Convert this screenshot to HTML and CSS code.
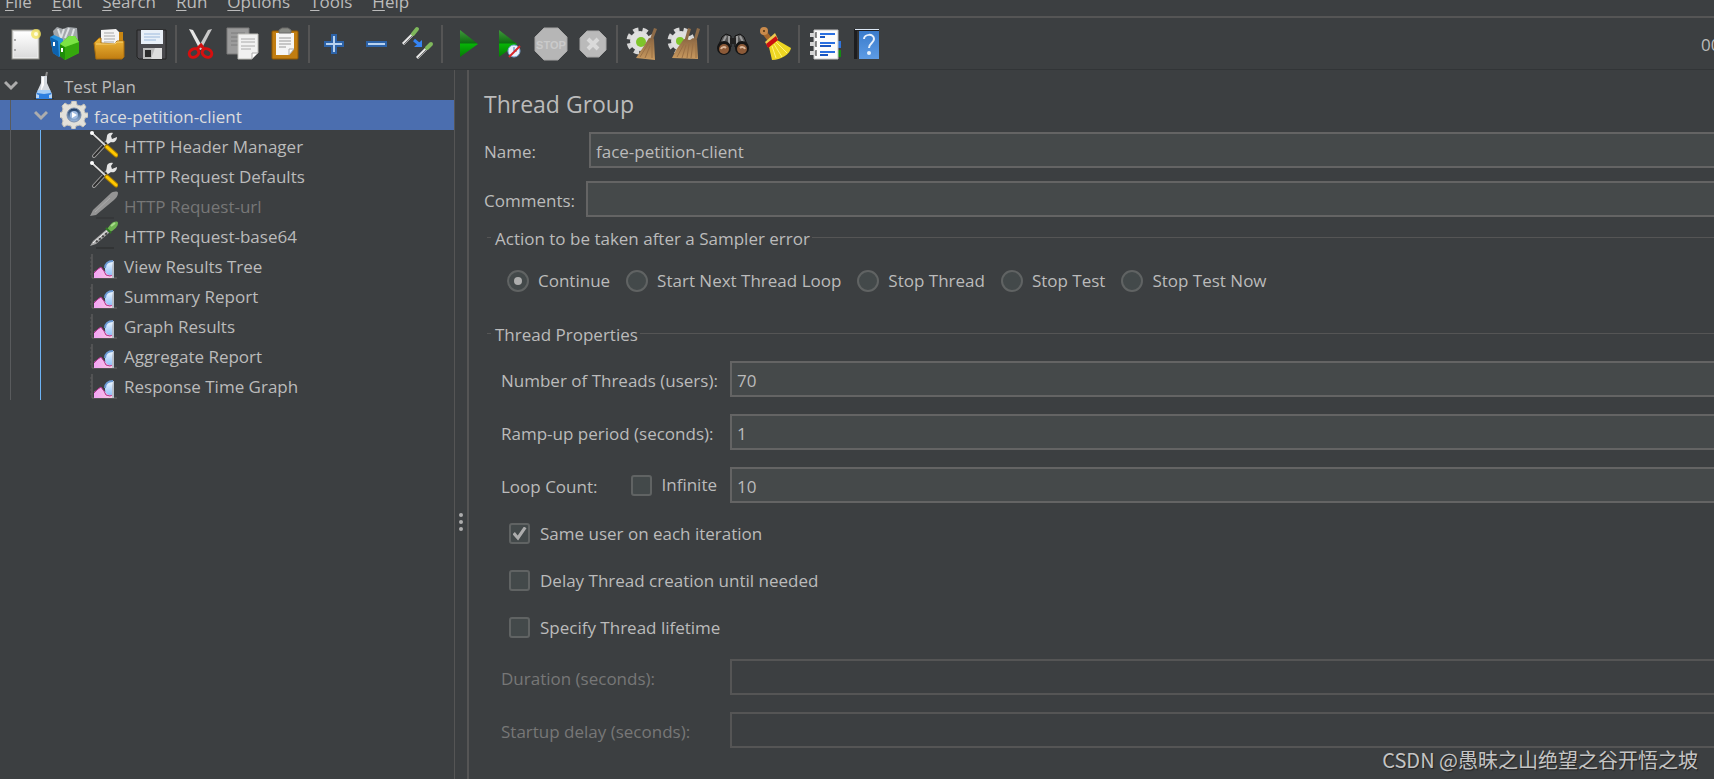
FILE: index.html
```html
<!DOCTYPE html>
<html lang="en">
<head>
<meta charset="utf-8">
<title>Thread Group</title>
<link rel="stylesheet" href="styles.css">
</head>
<body>
<svg class="defs" aria-hidden="true">
  <defs>
    <linearGradient id="paper" x1="0" y1="0" x2="0" y2="1"><stop offset="0" stop-color="#fff"/><stop offset="1" stop-color="#dcdcdc"/></linearGradient>
    <linearGradient id="gold" x1="0" y1="0" x2="0" y2="1"><stop offset="0" stop-color="#f0b93a"/><stop offset="1" stop-color="#c17d11"/></linearGradient>
    <linearGradient id="green" x1="0" y1="0" x2="0" y2="1"><stop offset="0" stop-color="#3f9a3a"/><stop offset=".48" stop-color="#0f6b12"/><stop offset=".52" stop-color="#06b406"/><stop offset="1" stop-color="#067a06"/></linearGradient>
    <linearGradient id="straw" x1="0" y1="0" x2="0" y2="1"><stop offset="0" stop-color="#8a6642"/><stop offset="1" stop-color="#c99a5f"/></linearGradient>
    <linearGradient id="book" x1="0" y1="0" x2="0" y2="1"><stop offset="0" stop-color="#3a7bcb"/><stop offset="1" stop-color="#5d9be4"/></linearGradient>
    <linearGradient id="pink" x1="0" y1="0" x2="1" y2="0"><stop offset="0" stop-color="#f3a3f5"/><stop offset="1" stop-color="#f9cbe0"/></linearGradient>
    <linearGradient id="sky" x1="0" y1="0" x2="0" y2="1"><stop offset="0" stop-color="#f4faff"/><stop offset="1" stop-color="#8ec0fa"/></linearGradient>
    <linearGradient id="lens" x1="0" y1="0" x2="0" y2="1"><stop offset="0" stop-color="#16365f"/><stop offset="1" stop-color="#9dbce2"/></linearGradient>
    <symbol id="tools" viewBox="0 0 28 28">
      <path d="M4 25L18 10" stroke="#a0a0a0" stroke-width="4" stroke-linecap="round"/>
      <path d="M4 25L17 11" stroke="#2c2c2c" stroke-width="2" stroke-linecap="round"/>
      <path d="M17 5c0-2 3-4 6-3l-2 3 1 3 5-2c0 4-3 6-6 5l-3 2-2-2z" fill="#e4e4e4"/>
      <path d="M2 2l14 13" stroke="#161616" stroke-width="3"/>
      <path d="M2 2l14 13" stroke="#d9d9d9" stroke-width="2"/>
      <circle cx="2" cy="2" r="2" fill="#fff"/>
      <path d="M17 16l9 8" stroke="#a67c00" stroke-width="5" stroke-linecap="round"/>
      <path d="M17 16l9 8" stroke="#ffc800" stroke-width="3" stroke-linecap="round"/>
    </symbol>
    <symbol id="chart" viewBox="0 0 28 28">
      <path d="M2 3v24h25" fill="none" stroke="#686868"/>
      <path d="M0 7h2M0 11h2M0 15h2M0 19h2M0 23h2" stroke="#5a5a5a"/>
      <path d="M4 27v-6l4-3 3-2 2 3 3 2 8 2v4z" fill="url(#pink)"/>
      <path d="M4 22l4-4 3-2 3 4 2 4 4 1 4-2" fill="none" stroke="#b0308a" stroke-width="1"/>
      <path d="M24 10v13l-3 1c-4 0-6-2-6-6 0-5 3-8 9-8z" fill="url(#sky)"/>
      <path d="M15 17c0-4 3-7 8-7" fill="none" stroke="#6b9ad6" stroke-width="2"/>
      <path d="M23 10h1v17h-2V16z" fill="#b7bfca"/>
    </symbol>
  </defs>
</svg>

<nav class="menubar" aria-label="Main menu">
  <button type="button"><u>F</u>ile</button>
  <button type="button"><u>E</u>dit</button>
  <button type="button"><u>S</u>earch</button>
  <button type="button"><u>R</u>un</button>
  <button type="button"><u>O</u>ptions</button>
  <button type="button"><u>T</u>ools</button>
  <button type="button"><u>H</u>elp</button>
</nav>

<div class="toolbar" role="toolbar" aria-label="Tools">
  <button type="button" aria-label="New"><svg viewBox="0 0 32 32"><rect x="2" y="2" width="27" height="29" fill="#e9e9e9" stroke="#8a8a82"/><rect x="4" y="4" width="23" height="25" fill="url(#paper)"/><path d="M5 11v2M5 21v2" stroke="#aaa" stroke-width="2"/><circle cx="26" cy="6" r="5" fill="#f3e45e" opacity=".8"/><circle cx="26" cy="6" r="2" fill="#fffde0"/></svg></button>
  <button type="button" aria-label="Templates"><svg viewBox="3 0 32 32"><path d="M4 3l4-4 6 2 5-2 9 1 1 13H6z" fill="#a3a8ac"/><path d="M9 1l3 9M15 1l-3 9M20 0l-4 10M25 1l-3 10" stroke="#dfe2e4" stroke-width="2"/><path d="M1 9l4-2 9 4v15l-4 3-6-4z" fill="#2590dc"/><path d="M1 9l8 4 1 16-6-4z" fill="#0d62ae"/><path d="M5 14v4" stroke="#fff" stroke-width="2"/><path d="M11 16l9-8h6l4 6v11l-14 7-5-4z" fill="#3fbf12"/><path d="M11 16l5 3v13l-5-4z" fill="#1f8d08"/><path d="M16 19l14-5v11l-14 7z" fill="#35a80d"/><path d="M11 16l9-8h6l4 6-14 5z" fill="#7be344"/><path d="M13 20v4" stroke="#fff" stroke-width="2"/></svg></button>
  <button type="button" aria-label="Open"><svg viewBox="0 0 32 32"><path d="M19 4h10v24h-9z" fill="#c98612"/><path d="M7 2l15-1 3 3v14H7z" fill="#f4f4f4"/><path d="M10 5h10M10 8h11M10 11h11M10 14h10" stroke="#a7a7a7"/><path d="M0 15l5-5h2v5l14 1 2-3h7v16l-2 2H2z" fill="url(#gold)" stroke="#a86d0d"/><path d="M2 16h19l2-2h6" stroke="#f9d475" fill="none"/></svg></button>
  <button type="button" aria-label="Save"><svg viewBox="0 0 32 32"><path d="M1 2h29v29H3l-2-2z" fill="#4a4a4e" stroke="#222"/><path d="M5 2h22v14H5z" fill="#e9f0f8"/><path d="M8 6h16M8 9h16M8 12h12" stroke="#9cb9dc"/><path d="M7 20h19v11H7z" fill="#bcbcbc"/><path d="M9 22h6v7H9z" fill="#2c2c2c"/><path d="M19 20l7 0v11H15z" fill="#dedede"/></svg></button>
  <span class="sep"></span>
  <button type="button" aria-label="Cut"><svg viewBox="0 0 32 32"><path d="M4 1l4 1 10 18-3 2z" fill="#e6e6e6"/><path d="M27 1l-4 1-10 18 3 2z" fill="#c9c9c9"/><ellipse cx="9" cy="25" rx="5" ry="4" fill="none" stroke="#d60f0f" stroke-width="3" transform="rotate(-30 9 25)"/><ellipse cx="22" cy="25" rx="5" ry="4" fill="none" stroke="#d60f0f" stroke-width="3" transform="rotate(30 22 25)"/><path d="M12 21l4-4 3 4" stroke="#d60f0f" stroke-width="3" fill="none"/></svg></button>
  <button type="button" aria-label="Copy"><svg viewBox="0 0 32 32"><path d="M0 0h22v26H0z" fill="#9b9b9b" stroke="#7b7b7b"/><path d="M4 5h14M4 9h14M4 13h8M4 17h8" stroke="#7c7c7c"/><path d="M11 6h20v19l-6 6H11z" fill="#f1f1f1" stroke="#bdbdb8"/><path d="M14 11h14M14 14h14M14 18h14M14 21h10" stroke="#aaa"/><path d="M25 31v-6h6z" fill="#fff" stroke="#aaa"/></svg></button>
  <button type="button" aria-label="Paste"><svg viewBox="0 0 32 32"><rect x="3" y="3" width="26" height="28" rx="1" fill="#c17d11" stroke="#8f5902"/><path d="M7 5h18v16l-5 6H7z" fill="#f5f5f5"/><path d="M10 10h12M10 13h12M10 16h12M10 19h7" stroke="#999"/><path d="M20 27v-6h5z" fill="#fff" stroke="#aaa"/><path d="M10 5V2l3-2h6l3 2v3z" fill="#888a85" stroke="#6b6b68"/></svg></button>
  <span class="sep"></span>
  <button type="button" aria-label="Expand all"><svg viewBox="0 0 32 32"><path d="M14 7h4v7h7v4h-7v7h-4v-7H7v-4h7z" fill="#b9d2ee" stroke="#2d63a8" stroke-width="2"/></svg></button>
  <button type="button" aria-label="Collapse all"><svg viewBox="0 0 32 32"><rect x="7" y="14" width="19" height="4" fill="#b9d2ee" stroke="#2d63a8" stroke-width="2"/></svg></button>
  <button type="button" aria-label="Toggle"><svg viewBox="0 0 32 32"><path d="M1 16L11 6" stroke="#e8e8e8" stroke-width="3"/><path d="M2 16L12 6" stroke="#777" stroke-width="1"/><path d="M11 6l4-5" stroke="#7fb85c" stroke-width="4" stroke-linecap="round"/><path d="M12 12l6 5" stroke="#3584f4" stroke-width="3"/><path d="M20 12v7h-8z" fill="#3584f4"/><path d="M15 30l9-9" stroke="#e8e8e8" stroke-width="3"/><path d="M16 30l9-9" stroke="#777" stroke-width="1"/><path d="M25 20l4-4" stroke="#7fb85c" stroke-width="4" stroke-linecap="round"/></svg></button>
  <span class="sep"></span>
  <button type="button" aria-label="Start"><svg viewBox="0 0 32 32"><path d="M9 2l18 14L9 29z" fill="url(#green)"/></svg></button>
  <button type="button" aria-label="Start no pauses"><svg viewBox="0 0 32 32"><path d="M6 2l18 14L6 29z" fill="url(#green)"/><circle cx="21" cy="23" r="6" fill="#e8f1fb" stroke="#7aa7d8"/><path d="M21 19v4h3" stroke="#4475ad" fill="none"/><path d="M16 29L27 18" stroke="#d7262b" stroke-width="2"/></svg></button>
  <button type="button" aria-label="Stop"><svg viewBox="0 0 32 32"><path d="M9 0h14l9 9v14l-9 9H9l-9-9V9z" fill="#b6b6b6" stroke="#a6a6a6"/><text x="16" y="21" class="stop-label">STOP</text></svg></button>
  <button type="button" aria-label="Shutdown"><svg viewBox="0 0 32 32"><path d="M10 3h12l7 7v12l-7 7H10l-7-7V10z" fill="#bababa" stroke="#a9a9a9"/><path d="M11 11l10 10M21 11L11 21" stroke="#dadada" stroke-width="4"/></svg></button>
  <span class="sep"></span>
  <button type="button" aria-label="Clear"><svg viewBox="0 0 32 32"><circle cx="14" cy="13" r="11" fill="none" stroke="#d7d7d7" stroke-width="5" stroke-dasharray="5 4"/><circle cx="14" cy="13" r="10" fill="#e0e0e0"/><circle cx="15" cy="14" r="5" fill="#7fc52b"/><path d="M28 0l3 1-5 13h-3z" fill="#8d6b48"/><path d="M23 10l5 1 1 21-19-2 6-9z" fill="url(#straw)"/><path d="M22 16l-8 13M24 18l-5 12M26 15v15" stroke="#9a7045"/></svg></button>
  <button type="button" aria-label="Clear all"><svg viewBox="0 0 32 32"><circle cx="13" cy="13" r="11" fill="none" stroke="#d7d7d7" stroke-width="5" stroke-dasharray="5 4"/><circle cx="13" cy="13" r="10" fill="#e0e0e0"/><circle cx="12" cy="13" r="4" fill="#7fc52b"/><path d="M20 0l3 1-4 13h-3zM29 0l3 1-4 13h-3z" fill="#8d6b48"/><path d="M16 11l6 1 3-2 4 2 1 19-26-1 4-8z" fill="url(#straw)"/><path d="M16 16L9 29M18 17l-4 13M21 16l-2 14M25 15l-2 15M28 16v14" stroke="#9a7045"/></svg></button>
  <span class="sep"></span>
  <button type="button" aria-label="Search"><svg viewBox="0 0 32 32"><path d="M9 6l5 2v11H1L5 9zM23 6l-5 2v11h13L27 9z" fill="#555" stroke="#111"/><path d="M13 10h6v6h-6z" fill="#222"/><path d="M9 8l-4 8M23 8l4 8M12 8v8M20 8v8" stroke="#9a9a9a" stroke-width="2"/><circle cx="7" cy="20" r="7" fill="#151515"/><circle cx="25" cy="20" r="7" fill="#151515"/><circle cx="7" cy="21" r="5" fill="#8c5a38"/><circle cx="25" cy="21" r="5" fill="#8c5a38"/><path d="M4 21a3 3 0 0 1 5-1M23 20a3 3 0 0 1 5 1" stroke="#d9b598" stroke-width="2" fill="none"/></svg></button>
  <button type="button" aria-label="Reset search"><svg viewBox="0 0 32 32"><path d="M5 4l7 9" stroke="#a5672c" stroke-width="5" stroke-linecap="round"/><circle cx="5" cy="3" r="4" fill="#c98a4b"/><circle cx="5" cy="3" r="1" fill="#4d3011"/><path d="M6 14l10-9 3 6-10 8z" fill="#eaca4f"/><path d="M18 12l14 8c-1 6-10 12-19 12l-3-13z" fill="#edd622"/><path d="M13 18l4 12M15 16l8 13M17 14l11 11" stroke="#fff27a"/><path d="M7 16l10-8 2 4-10 8z" fill="#cc1010"/></svg></button>
  <span class="sep"></span>
  <button type="button" aria-label="Function helper"><svg viewBox="0 0 32 32"><path d="M27 13h6v7h-6z" fill="#2f74dd"/><path d="M27 22h6v7h-6z" fill="#138a13"/><path d="M6 2h24v29H6z" fill="#fbfbfb" stroke="#c4c4c4"/><path d="M12 6h15M12 15h15M12 24h15" stroke="#2a6fe0" stroke-width="2"/><path d="M12 9h5M12 18h11M12 27h8" stroke="#1a55c0" stroke-width="2"/><path d="M2 7h6M2 16h6M2 25h6" stroke="#d4d4d4" stroke-width="4"/><path d="M8 4v6M8 13v6M8 22v6" stroke="#222" stroke-width="1"/></svg></button>
  <button type="button" aria-label="Help"><svg viewBox="0 0 32 32"><path d="M4 1h25v30H4z" fill="#1d1d1f"/><path d="M9 3h20v28H9z" fill="url(#book)"/><path d="M5 1h24v1H5z" fill="#dce8f5"/><path d="M8 3v28" stroke="#4b4b4b" stroke-width="1"/><path d="M14 11c0-5 10-6 10 0 0 4-5 4-5 9" fill="none" stroke="#e6f0fb" stroke-width="2"/><circle cx="19" cy="25" r="2" fill="#e6f0fb"/></svg></button>
  <span class="timer">00:00:00</span>
</div>

<main class="workspace">
  <aside class="tree-panel">
    <ul class="tree" role="tree" aria-label="Test plan tree">
      <li role="treeitem" aria-expanded="true">
        <div class="row level-1">
          <svg class="chevron" viewBox="0 0 14 14"><path d="M1 4l6 6 6-6"/></svg>
          <svg class="node-icon" viewBox="0 0 28 28"><path d="M17 1l-2 9" stroke="#8d8d8d" stroke-width="2"/><path d="M4 28h20" stroke="#25282a" stroke-width="1"/><path d="M11 5h6v7l5 11v5H6v-5l5-11z" fill="#d5dae0"/><path d="M12 6h2v8l-3 6z" fill="#fff"/><path d="M8 19h12l2 5v4H6v-4z" fill="#2d7fe0"/><path d="M8 19h12l1 3-7 1-7-1z" fill="#a5cdf6"/><path d="M6 23l3 1v3H6zM22 23l-3 1v3h3z" fill="#b4d2f3"/></svg>
          <span>Test Plan</span>
        </div>
        <ul class="branch grey" role="group">
          <li role="treeitem" aria-expanded="true" aria-selected="true">
            <div class="row level-2 selected">
              <svg class="chevron" viewBox="0 0 14 14"><path d="M1 4l6 6 6-6"/></svg>
              <svg class="node-icon" viewBox="0 0 28 28"><path d="M12 0h4l1 4 4 1 3-2 2 3-2 3 1 3 3 0v4l-3 1-1 3 2 3-3 3-3-2-4 1-1 3h-3l-1-3-4-1-3 2-2-3 1-3-1-3-3-1v-4l3-1 1-3-1-3 3-3 3 2 3-1z" fill="#e3e1da" stroke="#c4c1b8"/><circle cx="14" cy="14" r="7" fill="url(#lens)" stroke="#7c90ae"/><circle cx="14" cy="14" r="4" fill="#9fbbe0"/><path d="M12 11l5 3-5 3z" fill="#fff"/></svg>
              <span>face-petition-client</span>
            </div>
            <ul class="branch blue" role="group">
              <li class="row level-3" role="treeitem"><svg class="node-icon"><use href="#tools"/></svg><span>HTTP Header Manager</span></li>
              <li class="row level-3" role="treeitem"><svg class="node-icon"><use href="#tools"/></svg><span>HTTP Request Defaults</span></li>
              <li class="row level-3 off" role="treeitem"><svg class="node-icon" viewBox="0 0 28 28"><path d="M6 27h18" stroke="#303234"/><path d="M0 25l3-6L20 3c3-3 8-3 8-1 0 3-2 5-4 7L6 24z" fill="#949494"/><path d="M5 21L20 7" stroke="#a9a9a9"/></svg><span>HTTP Request-url</span></li>
              <li class="row level-3" role="treeitem"><svg class="node-icon" viewBox="0 0 28 28"><path d="M6 27h18" stroke="#282a2b"/><path d="M0 25l3-5L17 8l3 3L6 23z" fill="#a9a9a9"/><path d="M3 22L18 9" stroke="#f4f4f4" stroke-width="1"/><path d="M6 21l11-9" stroke="#444" stroke-width="2" stroke-dasharray="2 2"/><path d="M17 8l4-5c3-3 7-3 7-1 0 3-3 6-6 8l-2 1z" fill="#6fb352"/><path d="M16 7l5 5" stroke="#2f7623" stroke-width="2"/><path d="M21 5l4-3" stroke="#a9dc8c" stroke-width="2"/></svg><span>HTTP Request-base64</span></li>
              <li class="row level-3" role="treeitem"><svg class="node-icon"><use href="#chart"/></svg><span>View Results Tree</span></li>
              <li class="row level-3" role="treeitem"><svg class="node-icon"><use href="#chart"/></svg><span>Summary Report</span></li>
              <li class="row level-3" role="treeitem"><svg class="node-icon"><use href="#chart"/></svg><span>Graph Results</span></li>
              <li class="row level-3" role="treeitem"><svg class="node-icon"><use href="#chart"/></svg><span>Aggregate Report</span></li>
              <li class="row level-3" role="treeitem"><svg class="node-icon"><use href="#chart"/></svg><span>Response Time Graph</span></li>
            </ul>
          </li>
        </ul>
      </li>
    </ul>
  </aside>

  <div class="splitter" role="separator" aria-orientation="vertical"><i></i><i></i><i></i></div>

  <form class="editor">
    <h1>Thread Group</h1>
    <div class="field name-field"><label for="name">Name:</label><input type="text" id="name" value="face-petition-client"></div>
    <div class="field comments-field"><label for="comments">Comments:</label><input type="text" id="comments"></div>

    <fieldset class="on-error">
      <legend>Action to be taken after a Sampler error</legend>
      <div class="radios">
        <label><input type="radio" name="on-error" checked>Continue</label>
        <label><input type="radio" name="on-error">Start Next Thread Loop</label>
        <label><input type="radio" name="on-error">Stop Thread</label>
        <label><input type="radio" name="on-error">Stop Test</label>
        <label><input type="radio" name="on-error">Stop Test Now</label>
      </div>
    </fieldset>

    <fieldset class="properties">
      <legend>Thread Properties</legend>
      <div class="props">
        <label for="threads">Number of Threads (users):</label><input type="text" id="threads" value="70">
        <label for="ramp">Ramp-up period (seconds):</label><input type="text" id="ramp" value="1">
        <div class="loop"><label for="loops">Loop Count:</label><label class="check"><input type="checkbox">Infinite</label></div><input type="text" id="loops" value="10">
      </div>
      <div class="checks">
        <label class="check"><input type="checkbox" checked>Same user on each iteration</label>
        <label class="check"><input type="checkbox">Delay Thread creation until needed</label>
        <label class="check"><input type="checkbox">Specify Thread lifetime</label>
      </div>
      <div class="props">
        <label for="duration" class="off">Duration (seconds):</label><input type="text" id="duration" disabled>
        <label for="delay" class="off">Startup delay (seconds):</label><input type="text" id="delay" disabled>
      </div>
    </fieldset>
  </form>
</main>
<div class="watermark">CSDN @愚昧之山绝望之谷开悟之坡</div>
</body>
</html>
```

FILE: styles.css
```css
:root {
  --bg: #3c3f41;
  --field: #45494a;
  --line: #555555;
  --edge: #646464;
  --text: #bbbbbb;
  --muted: #777777;
}

* { box-sizing: border-box; }

body {
  margin: 0;
  height: 100vh;
  display: flex;
  flex-direction: column;
  overflow: hidden;
  background: var(--bg);
  color: var(--text);
  font: 17px/24px "Open Sans", "Noto Sans", sans-serif;
}

button, input { font: inherit; color: inherit; }
button { border: 0; padding: 0; background: none; }
ul { list-style: none; margin: 0; padding: 0; }
.defs { position: absolute; width: 0; height: 0; }

.menubar {
  flex: none;
  display: flex;
  align-items: flex-end;
  gap: 20px;
  height: 18px;
  padding-left: 5px;
  border-bottom: 2px solid var(--line);
  overflow: hidden;
}
.menubar button { line-height: 28px; }
.menubar u { text-underline-offset: 2px; }

.toolbar {
  flex: none;
  display: flex;
  align-items: center;
  height: 52px;
  padding-left: 5px;
  border-bottom: 1px solid #323537;
}
.toolbar button {
  flex: none;
  width: 42px;
  height: 42px;
  display: grid;
  place-items: center;
}
.toolbar svg { width: 32px; height: 32px; overflow: visible; }
.sep {
  flex: none;
  width: 2px;
  height: 38px;
  margin: 0 3px 0 2px;
  background: var(--line);
}
.stop-label {
  font: bold 11px "Liberation Sans", sans-serif;
  text-anchor: middle;
  fill: #cacaca;
}
.timer {
  width: 13px;
  margin-left: auto;
  padding-top: 2px;
  overflow: hidden;
  white-space: nowrap;
}

.workspace { flex: 1; display: flex; min-height: 0; }

.tree-panel { flex: none; width: 454px; }
.row {
  display: flex;
  align-items: center;
  height: 30px;
  white-space: nowrap;
}
.row span { padding-top: 4px; }
.level-1 { padding-left: 4px; }
.level-2 { padding-left: 34px; }
.level-3 { padding-left: 90px; }
.selected { background: #4b6eaf; color: #dddddd; }
.off { color: var(--muted); }
.chevron {
  width: 14px;
  height: 14px;
  margin-right: 12px;
  fill: none;
  stroke: #adadad;
  stroke-width: 3;
}
.node-icon { width: 28px; height: 28px; margin-right: 6px; }
.branch { position: relative; }
.branch::before {
  content: "";
  position: absolute;
  top: 0;
  bottom: 0;
  width: 1px;
}
.grey::before { left: 10px; background: #595b5d; }
.blue::before { left: 40px; background: #6db3f5; }

.splitter {
  flex: none;
  display: flex;
  flex-direction: column;
  align-items: center;
  justify-content: center;
  gap: 3px;
  width: 15px;
  padding-top: 194px;
  border-left: 1px solid var(--line);
  border-right: 2px solid var(--line);
}
.splitter i {
  width: 4px;
  height: 4px;
  border-radius: 50%;
  background: #adadad;
}

.editor { flex: 1; min-width: 0; padding: 18px 0 0 15px; white-space: nowrap; }
h1 { margin: 0 0 12px; font-size: 23px; line-height: 32px; font-weight: 400; }

input[type="text"] {
  width: 100%;
  min-width: 0;
  height: 36px;
  padding: 2px 5px 0;
  border: 2px solid var(--edge);
  border-right: 0;
  border-radius: 0;
  background: var(--field);
}
input[type="text"]:disabled { background: var(--bg); border-color: var(--line); }

.field { display: grid; align-items: center; margin-bottom: 13px; }
.field > label, .props > label, .loop > label:first-child { padding-top: 4px; }
.name-field { grid-template-columns: 105px 1fr; }
.comments-field { grid-template-columns: 102px 1fr; margin-bottom: 6px; }

fieldset {
  min-width: 0;
  margin: 0 0 0 3px;
  padding: 0;
  border: 0;
  border-top: 1px solid var(--line);
}
legend { margin-left: 4px; padding: 4px 2px 0 4px; }

.radios { display: flex; gap: 16px; padding: 18px 0 26px 20px; }
.radios label, .check { display: flex; align-items: center; gap: 9px; }

input[type="radio"], input[type="checkbox"] {
  appearance: none;
  flex: none;
  display: grid;
  place-items: center;
  margin: 0;
  border: 2px solid #606363;
  background: #43494a;
}
input[type="radio"] { width: 22px; height: 22px; border-radius: 50%; }
input[type="radio"]:checked::before {
  content: "";
  width: 8px;
  height: 8px;
  border-radius: 50%;
  background: #adadad;
}
input[type="checkbox"] { width: 21px; height: 21px; border-radius: 3px; }
input[type="checkbox"]:checked::before {
  content: "";
  width: 14px;
  height: 14px;
  background: #adadad;
  clip-path: polygon(0 55%, 17% 40%, 37% 65%, 82% 0, 100% 12%, 40% 100%);
}

.props {
  display: grid;
  grid-template-columns: 229px 1fr;
  align-items: center;
  row-gap: 17px;
  padding-left: 14px;
}
.properties .props:first-of-type { padding-top: 14px; }
.loop { display: flex; justify-content: space-between; align-items: center; padding-right: 13px; }
.checks { display: grid; grid-auto-rows: 47px; padding: 7px 0 8px 22px; }
.checks .check { gap: 10px; }

.watermark {
  position: absolute;
  right: 16px;
  bottom: 4px;
  font: 20px/30px "Noto Sans CJK SC", sans-serif;
  color: #c4c4c4;
  text-shadow: 1px 1px 1px #222;
}
```
